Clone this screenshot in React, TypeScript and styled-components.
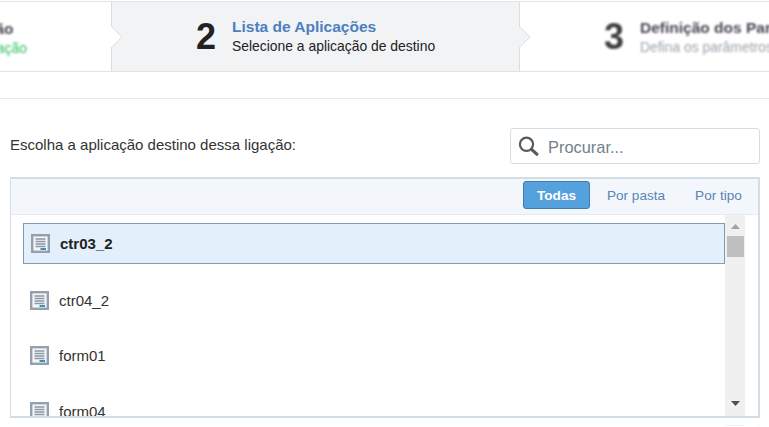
import React from 'react';
import styled, { createGlobalStyle } from 'styled-components';

const Global = createGlobalStyle`
  html, body { margin: 0; padding: 0; background: #fff; }
  body { font-family: "Liberation Sans", Arial, sans-serif; width: 769px; height: 427px; overflow: hidden; }
`;

const Page = styled.div`
  width: 769px;
  height: 427px;
  overflow: hidden;
  padding-top: 1px;
  box-sizing: border-box;
`;

const Stepper = styled.div`
  display: flex;
  height: 71px;
  box-sizing: border-box;
  border-top: 1px solid #e2e3e5;
  border-bottom: 1px solid #e2e3e5;
  overflow: hidden;
`;

const Step = styled.div<{ $active?: boolean; $width: number; $clip?: boolean }>`
  position: relative;
  flex: 0 0 ${p => p.$width}px;
  width: ${p => p.$width}px;
  box-sizing: border-box;
  display: flex;
  align-items: center;
  background: ${p => (p.$active ? '#f2f3f5' : '#fff')};
  border-right: ${p => (p.$clip ? 'none' : '1px solid #dcdde0')};
  padding-left: 84px;
  ${p => p.$clip && 'overflow: hidden;'}
`;

const Chevron = styled.svg`
  position: absolute;
  right: -12px;
  top: 24px;
  z-index: 2;
`;

const Num = styled.div<{ $blur?: boolean }>`
  font-size: 36px;
  font-weight: 700;
  line-height: 36px;
  flex: 0 0 36px;
  color: ${p => (p.$blur ? '#3f3f3f' : '#222')};
  ${p => p.$blur && 'filter: blur(1px);'}
`;

const StepText = styled.div<{ $blur?: boolean }>`
  display: flex;
  flex-direction: column;
  white-space: nowrap;
  margin-top: ${p => (p.$blur ? 1 : -1)}px;
  ${p => p.$blur && 'filter: blur(1.3px);'}
`;

const StepTitle = styled.div<{ $muted?: boolean }>`
  font-size: 15.5px;
  line-height: 19px;
  font-weight: 700;
  color: ${p => (p.$muted ? '#4a4650' : '#4c80c0')};
`;

const StepSub = styled.div<{ $tone?: string }>`
  font-size: 13.9px;
  line-height: 17px;
  margin-top: 2px;
  color: ${p => p.$tone || '#222'};
`;

const FirstStepText = styled(StepText)`
  position: absolute;
  right: 84px;
  top: 16px;
  align-items: flex-start;
`;

const Rule = styled.div`
  height: 1px;
  margin-top: 26px;
  background: #e6e7e9;
`;

const Toolbar = styled.div`
  display: flex;
  align-items: center;
  justify-content: space-between;
  height: 36px;
  margin: 29px 9px 0 10px;
`;

const Prompt = styled.div`
  font-size: 15px;
  color: #333;
  margin-top: -4px;
`;

const Search = styled.div`
  display: flex;
  align-items: center;
  width: 250px;
  height: 36px;
  box-sizing: border-box;
  border: 1px solid #d3dfe7;
  border-radius: 3px;
  padding-left: 7px;
  gap: 9px;
`;

const SearchText = styled.span`
  font-size: 16.4px;
  color: #73808c;
  padding-top: 2px;
`;

const Panel = styled.div`
  margin: 13px 9px 0 10px;
  height: 241px;
  box-sizing: border-box;
  border-top: 2px solid #d3dde5;
  border-right: 2px solid #d3dde5;
  border-bottom: 2px solid #d3dde5;
  border-left: 1px solid #d3dde5;
  display: flex;
  flex-direction: column;
`;

const PanelHead = styled.div`
  flex: 0 0 36px;
  box-sizing: border-box;
  display: flex;
  align-items: center;
  justify-content: flex-end;
  background: #f3f7fb;
  border-bottom: 1px solid #e3ebf2;
  padding: 0 3px 3px 0;
`;

const Tab = styled.div<{ $active?: boolean; $w: number }>`
  width: ${p => p.$w}px;
  height: 28px;
  box-sizing: border-box;
  display: flex;
  align-items: center;
  justify-content: center;
  padding-top: 1px;
  font-size: 13.6px;
  border-radius: 3px;
  color: ${p => (p.$active ? '#fff' : '#5885b5')};
  font-weight: ${p => (p.$active ? 700 : 400)};
  background: ${p => (p.$active ? '#55a1dd' : 'transparent')};
  border: ${p => (p.$active ? '1px solid #3f7cb0' : 'none')};
`;

const Body = styled.div`
  flex: 1;
  min-height: 0;
  display: flex;
  overflow: hidden;
`;

const List = styled.div`
  flex: 0 0 714px;
  box-sizing: border-box;
  padding: 8px 0 0 12px;
  overflow: hidden;
`;

const Row = styled.div<{ $selected?: boolean }>`
  display: flex;
  align-items: center;
  box-sizing: border-box;
  height: ${p => (p.$selected ? 41 : 55)}px;
  gap: 10px;
  padding-left: 7px;
  margin-bottom: ${p => (p.$selected ? 9 : 0)}px;
  font-size: 15px;
  font-weight: ${p => (p.$selected ? 700 : 400)};
  color: ${p => (p.$selected ? '#222' : '#333')};
  background: ${p => (p.$selected ? '#e3f0fb' : 'transparent')};
  border: ${p => (p.$selected ? '1px solid #7f9cb6' : 'none')};
  &:nth-child(3) { margin-bottom: 1px; }
`;

const Scrollbar = styled.div`
  flex: 0 0 20px;
  background: #f0f0f0;
  position: relative;
`;

const ArrowBtn = styled.svg<{ $bottom?: boolean }>`
  position: absolute;
  ${p => (p.$bottom ? 'bottom: 10px;' : 'top: 9px;')}
  left: 6px;
`;

const Thumb = styled.div`
  position: absolute;
  top: 21px;
  left: 2px;
  width: 17px;
  height: 21px;
  background: #bfbfbf;
`;

const FootStrip = styled.div`
  display: flex;
  height: 1px;
  margin: 7px 9px 0 10px;
`;

const FootPiece = styled.div<{ $w: number; $gap: number }>`
  flex: 0 0 ${p => p.$w}px;
  margin-left: ${p => p.$gap}px;
  background: #f0f2f4;
`;

function AppIcon() {
  return (
    <svg width="19" height="19" viewBox="0 0 19 19" style={{ flex: '0 0 19px' }}>
      <rect x="1.2" y="1.2" width="16.6" height="16.6" fill="#f4f7fa" stroke="#94a1ad" strokeWidth="2.4" />
      <path d="M4.5 5h10M4.5 7.5h10M4.5 10h10M4.5 12.5h10" stroke="#8b97a3" strokeWidth="1.3" />
      <path d="M9.5 15h5.5" stroke="#3d8fb8" strokeWidth="2" />
    </svg>
  );
}

function SearchIcon() {
  return (
    <svg width="21" height="20" viewBox="0 0 21 20" style={{ flex: '0 0 21px' }}>
      <circle cx="8.5" cy="8.3" r="6.6" fill="none" stroke="#5a5a5a" strokeWidth="2.2" />
      <path d="M13.5 13.3 L18.8 18.2" stroke="#5a5a5a" strokeWidth="3.2" strokeLinecap="round" />
    </svg>
  );
}

function StepChevron({ fill }: { fill: string }) {
  return (
    <Chevron width="12" height="22" viewBox="0 0 12 22">
      <path d="M0 0 L11 11 L0 22 Z" fill={fill} />
      <path d="M0 0 L11 11 L0 22" fill="none" stroke="#dcdde0" strokeWidth="1" />
    </Chevron>
  );
}

export default function App() {
  return (
    <Page>
      <Global />
      <Stepper>
        <Step $width={112}>
          <FirstStepText $blur>
            <StepTitle $muted>Tipos de Ligação</StepTitle>
            <StepSub $tone="#2fc060">Selecione uma ligação</StepSub>
          </FirstStepText>
          <StepChevron fill="#fff" />
        </Step>
        <Step $width={408} $active>
          <Num>2</Num>
          <StepText>
            <StepTitle>Lista de Aplicações</StepTitle>
            <StepSub>Selecione a aplicação de destino</StepSub>
          </StepText>
          <StepChevron fill="#f2f3f5" />
        </Step>
        <Step $width={249} $clip>
          <Num $blur>3</Num>
          <StepText $blur>
            <StepTitle $muted>Definição dos Parâmetros</StepTitle>
            <StepSub $tone="#9aa3ab">Defina os parâmetros</StepSub>
          </StepText>
        </Step>
      </Stepper>
      <Rule />
      <Toolbar>
        <Prompt>Escolha a aplicação destino dessa ligação:</Prompt>
        <Search>
          <SearchIcon />
          <SearchText>Procurar...</SearchText>
        </Search>
      </Toolbar>
      <Panel>
        <PanelHead>
          <Tab $active $w={67}>Todas</Tab>
          <Tab $w={92}>Por pasta</Tab>
          <Tab $w={73}>Por tipo</Tab>
        </PanelHead>
        <Body>
          <List>
            <Row $selected><AppIcon />ctr03_2</Row>
            <Row><AppIcon />ctr04_2</Row>
            <Row><AppIcon />form01</Row>
            <Row><AppIcon />form04</Row>
          </List>
          <Scrollbar>
            <ArrowBtn width="9" height="5" viewBox="0 0 9 5"><path d="M4.5 0 L9 5 H0 Z" fill="#a3a3a3" /></ArrowBtn>
            <Thumb />
            <ArrowBtn $bottom width="9" height="5" viewBox="0 0 9 5"><path d="M0 0 H9 L4.5 5 Z" fill="#505050" /></ArrowBtn>
          </Scrollbar>
        </Body>
      </Panel>
      <FootStrip>
        <FootPiece $w={20} $gap={715} />
        <FootPiece $w={2} $gap={13} />
      </FootStrip>
    </Page>
  );
}
